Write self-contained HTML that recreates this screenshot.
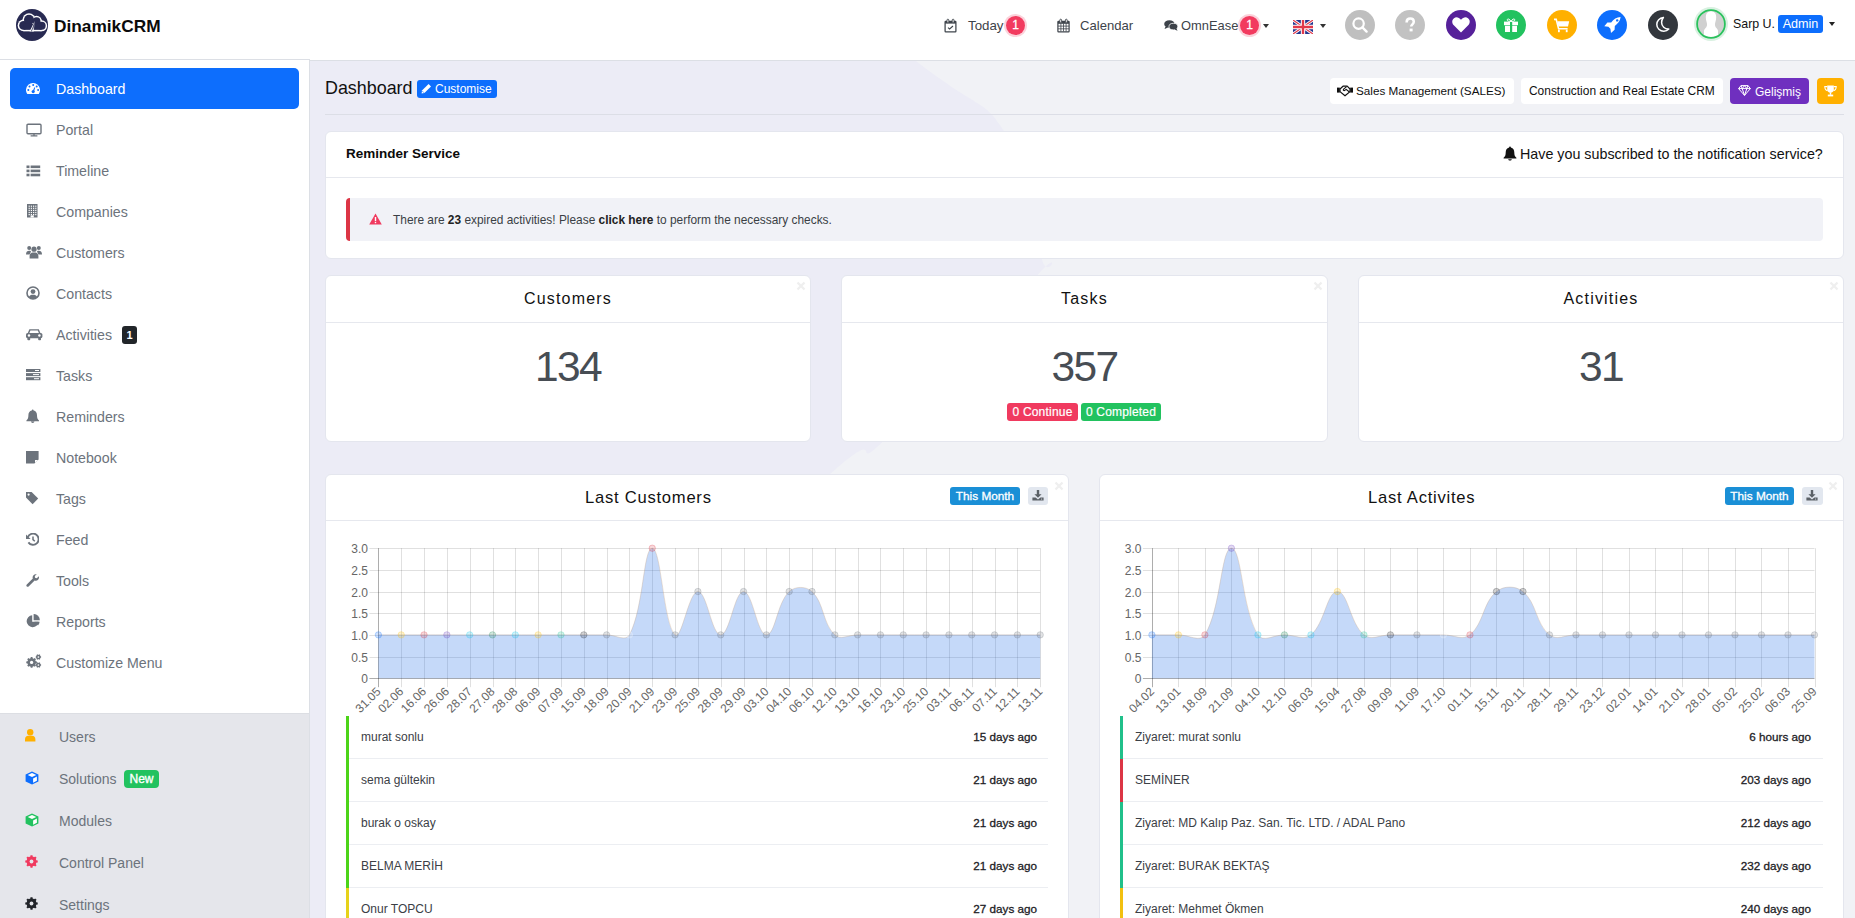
<!DOCTYPE html>
<html><head><meta charset="utf-8"><style>
*{box-sizing:border-box;margin:0;padding:0}
html,body{width:1855px;height:918px;overflow:hidden;font-family:"Liberation Sans",sans-serif;background:#eeeef6;color:#212529}
.a{position:absolute;white-space:nowrap}
#hdr{position:absolute;left:0;top:0;width:1855px;height:60px;background:#fff}
#side{position:absolute;left:0;top:60px;width:310px;height:858px;background:#fff;border-right:1px solid #dcdfe5}
#sideb{position:absolute;left:0;top:653px;width:309px;height:205px;background:#e5e6eb;border-top:1px solid #dcdee3}
.mi{position:absolute;left:0;width:309px;height:41px;font-size:14.2px;color:#6c737c}
.mi svg{position:absolute;left:26px;top:13px}
.mi .lb{position:absolute;left:56px;top:13px;white-space:nowrap;line-height:16px}
.card{position:absolute;background:#fff;border:1px solid #e4e6ee;border-radius:6px}
.circ{position:absolute;top:10px;width:30px;height:30px;border-radius:50%}
.circ svg{position:absolute;left:0;top:0}
.badge1{position:absolute;width:19px;height:19px;border-radius:50%;background:#f23b5f;box-shadow:0 0 0 2px #fbd3db;color:#fff;font-size:12px;font-weight:400;-webkit-text-stroke:0.3px #fff;text-align:center;line-height:19px}
.caret{position:absolute;width:0;height:0;border-left:3.5px solid transparent;border-right:3.5px solid transparent;border-top:4px solid #333}
.ttl{position:absolute;font-size:16px;letter-spacing:1.2px;color:#111;white-space:nowrap}
.xcl{position:absolute;color:#ddd;font-size:14px;font-weight:700;line-height:10px}
.li{position:absolute;height:43px;border-bottom:1px solid #eceef2}
.li .n{position:absolute;left:14px;top:14px;font-size:12px;color:#3d4248;white-space:nowrap}
.li .d{position:absolute;right:10px;top:14px;font-size:12px;font-weight:700;color:#23272b;white-space:nowrap}
</style></head><body>
<svg class="a" style="left:310px;top:60px" width="1545" height="858" viewBox="310 60 1545 858"><rect x="310" y="60" width="1545" height="858" fill="#f1f2f6"/><path d="M600 -180 C652.7 -139.8 848.7 9.2 916 61 C983.3 112.8 983.0 98.0 1004 131 C1025.0 164.0 1036.2 234.8 1041.8 258.8 C1047.4 282.8 1064.1 244.5 1037.6 275 C1011.1 305.5 916.6 409.1 882.7 441.7 C848.8 474.3 887.8 424.1 834 470.5 C780.2 516.9 657.3 631.8 560 720 C462.7 808.2 301.7 953.3 250 1000 L0 1000 L0 -200Z" fill="#ececf6"/></svg>
<div id="hdr"><svg class="a" style="left:16px;top:9px" width="32" height="32" viewBox="0 0 32 32"><circle cx="16" cy="16" r="16" fill="#282a52"/><circle cx="7.6" cy="16.4" r="5.95" fill="#fff"/><circle cx="13.0" cy="10.8" r="6.55" fill="#fff"/><circle cx="20.6" cy="12.2" r="5.35" fill="#fff"/><circle cx="25.6" cy="16.8" r="5.55" fill="#fff"/><rect x="7.6" y="13.25" width="18" height="9.10" fill="#fff"/><circle cx="7.6" cy="16.4" r="4.45" fill="#282a52"/><circle cx="13.0" cy="10.8" r="5.05" fill="#282a52"/><circle cx="20.6" cy="12.2" r="3.85" fill="#282a52"/><circle cx="25.6" cy="16.8" r="4.05" fill="#282a52"/><rect x="7.6" y="14.75" width="18" height="6.10" fill="#282a52"/><path d="M13.6 22.4 L18.6 12.2 L17.8 22.4Z" fill="#fff"/><path d="M15.2 22.6 L18.2 15.4" stroke="#282a52" stroke-width="0.7"/><path d="M17 20.6 L18.4 13.2" stroke="#282a52" stroke-width="0.5"/></svg><div class="a" style="left:54px;top:17px;font-size:17.3px;font-weight:700;color:#0b0b0b;line-height:18px">DinamikCRM</div><svg class="a" style="left:944px;top:18px" width="13" height="15" viewBox="0 0 13 15">
<rect x="1.1" y="3.4" width="10.8" height="10.4" rx="0.6" fill="none" stroke="#3f454c" stroke-width="1.25"/>
<rect x="1.1" y="3.4" width="10.8" height="2.2" fill="#3f454c"/>
<rect x="3" y="1.2" width="1.8" height="3.6" rx="0.9" fill="#fff" stroke="#3f454c" stroke-width="0.9"/><rect x="8.2" y="1.2" width="1.8" height="3.6" rx="0.9" fill="#fff" stroke="#3f454c" stroke-width="0.9"/>
<path d="M4 9.6 L5.6 11 L9 8" fill="none" stroke="#3f454c" stroke-width="1.1"/>
</svg><div class="a" style="left:968px;top:18px;font-size:13.3px;color:#3d434a;line-height:16px">Today</div><div class="badge1" style="left:1006px;top:16px">1</div><svg class="a" style="left:1057px;top:18px" width="13" height="15" viewBox="0 0 13 15">
<rect x="0.9" y="3.4" width="11.2" height="10.4" rx="0.6" fill="none" stroke="#3f454c" stroke-width="1.2"/>
<rect x="0.9" y="3.4" width="11.2" height="2.4" fill="#3f454c"/><line x1="3.9" y1="5.4" x2="3.9" y2="13.4" stroke="#3f454c" stroke-width="0.8"/><line x1="6.5" y1="5.4" x2="6.5" y2="13.4" stroke="#3f454c" stroke-width="0.8"/><line x1="9.1" y1="5.4" x2="9.1" y2="13.4" stroke="#3f454c" stroke-width="0.8"/><line x1="0.9" y1="8.1" x2="12.1" y2="8.1" stroke="#3f454c" stroke-width="0.8"/><line x1="0.9" y1="10.8" x2="12.1" y2="10.8" stroke="#3f454c" stroke-width="0.8"/>
<rect x="2.8" y="1.2" width="1.8" height="3.6" rx="0.9" fill="#fff" stroke="#3f454c" stroke-width="0.9"/><rect x="8.4" y="1.2" width="1.8" height="3.6" rx="0.9" fill="#fff" stroke="#3f454c" stroke-width="0.9"/>
</svg><div class="a" style="left:1080px;top:18px;font-size:13.1px;color:#3d434a;line-height:16px">Calendar</div><svg class="a" style="left:1164px;top:20px" width="14" height="11" viewBox="0 0 14 11">
<ellipse cx="5.4" cy="4" rx="5.2" ry="3.8" fill="#3d434a"/><path d="M1.5 6.5 L0.6 9 L4 7.5Z" fill="#3d434a"/>
<ellipse cx="9.4" cy="6.6" rx="4.4" ry="3.3" fill="#3d434a" stroke="#fff" stroke-width="0.8"/><path d="M12.4 8.6 L13.6 10.8 L10.4 9.6Z" fill="#3d434a"/>
</svg><div class="a" style="left:1181px;top:18px;font-size:12.9px;color:#3d434a;line-height:16px">OmnEase</div><div class="badge1" style="left:1240px;top:16px">1</div><div class="caret" style="left:1263px;top:24px"></div><svg class="a" style="left:1293px;top:20px" width="20" height="14" viewBox="0 0 60 42">
<rect width="60" height="42" fill="#23358f"/>
<path d="M0 0 L60 42 M60 0 L0 42" stroke="#fff" stroke-width="9"/>
<path d="M0 0 L60 42 M60 0 L0 42" stroke="#e2384a" stroke-width="3.5"/>
<path d="M30 0 V42 M0 21 H60" stroke="#fff" stroke-width="13"/>
<path d="M30 0 V42 M0 21 H60" stroke="#e2384a" stroke-width="7"/>
</svg><div class="caret" style="left:1320px;top:24px"></div><div class="circ" style="left:1345px;background:#bfbfbf"><svg width="30" height="30" viewBox="0 0 30 30"><circle cx="13.6" cy="13.6" r="5.2" fill="none" stroke="#fff" stroke-width="2.2"/><path d="M17.4 17.4 L21.6 21.6" stroke="#fff" stroke-width="2.4" stroke-linecap="round"/></svg></div><div class="circ" style="left:1395px;background:#c2c2c2"><svg width="30" height="30" viewBox="0 0 30 30"><path d="M11.6 12.4 C11.6 9.8 13.2 8.6 15.2 8.6 C17.4 8.6 18.8 9.9 18.8 11.8 C18.8 14.2 16.2 14.4 16.2 16.6" fill="none" stroke="#fff" stroke-width="2.5"/><rect x="14.6" y="18.6" width="3" height="2.8" fill="#fff"/></svg></div><div class="circ" style="left:1446px;background:#56219a"><svg width="30" height="30" viewBox="0 0 30 30"><path d="M15 22.4 L7.8 15.2 C5.6 13 5.8 9.8 8 8.2 C10.2 6.6 13 7.4 15 9.8 C17 7.4 19.8 6.6 22 8.2 C24.2 9.8 24.4 13 22.2 15.2Z" fill="#fff"/></svg></div><div class="circ" style="left:1496px;background:#22c25f"><svg width="30" height="30" viewBox="0 0 30 30"><rect x="8" y="11.6" width="14" height="3.6" fill="#fff"/><rect x="9" y="15.8" width="12" height="6.2" fill="#fff"/><rect x="14" y="11.6" width="2.2" height="10.4" fill="#22c25f"/><path d="M15 11.4 C13 8 10.6 8.6 11.4 10.6 C11.8 11.3 13.4 11.5 15 11.4 C16.6 11.5 18.2 11.3 18.6 10.6 C19.4 8.6 17 8 15 11.4Z" fill="none" stroke="#fff" stroke-width="1"/></svg></div><div class="circ" style="left:1547px;background:#ffb000"><svg width="30" height="30" viewBox="0 0 30 30"><path d="M7 9.4 L9.2 9.4 L11.6 18.8 L20.6 18.8" fill="none" stroke="#fff" stroke-width="1.6"/><path d="M10.3 11.2 L22.2 11.2 L21 16.6 L11.5 16.6Z" fill="#fff"/><rect x="11" y="19.6" width="1.8" height="2.6" fill="#fff"/><rect x="18.8" y="19.6" width="1.8" height="2.6" fill="#fff"/></svg></div><div class="circ" style="left:1597px;background:#0d6efd"><svg width="30" height="30" viewBox="0 0 30 30"><path d="M23.6 7.0 C19.6 7.2 16.6 9.2 14.2 12.4 L10.4 12.6 L7.3 16.2 L11.4 16.8 L13.4 18.8 L14 23 L17.6 19.8 L17.8 16 C21 13.6 23.2 10.8 23.6 7.0Z" fill="#fff"/><circle cx="20.2" cy="10.4" r="1.2" fill="#0d6efd"/></svg></div><div class="circ" style="left:1648px;background:#33373d"><svg width="30" height="30" viewBox="0 0 30 30"><path transform="translate(-0.8,-1.2)" stroke-linejoin="round" d="M16.2 8.6 C12.4 9 9.6 12 9.6 15.6 C9.6 19.4 12.8 22.4 16.6 22.4 C18.6 22.4 20.4 21.6 21.6 20.2 C17.6 20.4 14.4 17.6 14.4 13.8 C14.4 11.8 15.2 9.8 16.2 8.6Z" fill="none" stroke="#fff" stroke-width="1.5"/></svg></div><div class="a" style="left:1694px;top:7px;width:34px;height:34px;border-radius:50%;background:#d9f1e1"></div>
<svg class="a" style="left:1696px;top:9px" width="30" height="30" viewBox="0 0 30 30">
<defs><clipPath id="avc"><circle cx="15" cy="15" r="13"/></clipPath></defs>
<circle cx="15" cy="15" r="13" fill="#d0d0d0"/>
<g clip-path="url(#avc)"><path d="M11 4 C9.4 6 9.6 10 10.6 13 C11.2 15 11.4 17 9.6 19 C8.6 20 7.6 21.2 8 24 L8 30 L22 30 L22 24 C22.4 21.2 21.4 20 20.4 19 C18.6 17 18.8 15 19.4 13 C20.4 10 20.6 6 19 4 C17 1.6 13 1.6 11 4Z" fill="#fff"/></g>
<circle cx="15" cy="15" r="13.9" fill="none" stroke="#2ac15c" stroke-width="1.8"/>
</svg><div class="a" style="left:1733px;top:17px;font-size:12.4px;color:#111;line-height:15px">Sarp U.</div><div class="a" style="left:1778px;top:15px;width:45px;height:18px;border-radius:3px;background:#0d6efd;color:#fff;font-size:12.6px;line-height:18px;text-align:center">Admin</div><div class="caret" style="left:1829px;top:22px;border-top-color:#222"></div><div class="a" style="left:0;top:59px;width:310px;height:1px;background:#dcdfe5"></div><div class="a" style="left:309px;top:60px;width:1546px;height:1px;background:#dcdfe5"></div></div>
<div id="side"><div class="a" style="left:10px;top:8px;width:289px;height:41px;border-radius:5px;background:#0d6efd"></div><svg class="a" style="left:26px;top:23px" width="14" height="11" viewBox="0 0 14 11"><path d="M1.26 11 A7 7 0 1 1 12.74 11Z" fill="#fff"/><g fill="#0d6efd"><circle cx="7.2" cy="2.1" r="1"/><circle cx="3.5" cy="3.6" r="1"/><circle cx="10.7" cy="3.6" r="1"/><circle cx="2.3" cy="7" r="1"/><circle cx="12.1" cy="7" r="1"/><circle cx="7.2" cy="8.6" r="1.6"/><path d="M6.6 8.6 L8.4 4.2 L9.2 4.5 L7.8 8.9Z"/></g></svg><div class="a" style="left:56px;top:21px;font-size:14.2px;color:#fff;line-height:16px">Dashboard</div><svg class="a" style="left:26px;top:63px" width="16" height="14" viewBox="0 0 16 14"><rect x="1" y="1.2" width="14" height="9.6" rx="1" fill="none" stroke="#6c737c" stroke-width="1.4"/><path d="M8 11 V12.6 M4.6 12.9 H11.4" stroke="#6c737c" stroke-width="1.3"/></svg><div class="a" style="left:56px;top:62px;font-size:14.2px;color:#6c737c;line-height:16px">Portal</div><svg class="a" style="left:26px;top:104px" width="15" height="13" viewBox="0 0 15 13"><g fill="#6c737c"><rect x="0.5" y="1.5" width="3" height="2.6"/><rect x="4.6" y="1.5" width="9.6" height="2.6"/><rect x="0.5" y="5.6" width="3" height="2.6"/><rect x="4.6" y="5.6" width="9.6" height="2.6"/><rect x="0.5" y="9.7" width="3" height="2.6"/><rect x="4.6" y="9.7" width="9.6" height="2.6"/></g></svg><div class="a" style="left:56px;top:103px;font-size:14.2px;color:#6c737c;line-height:16px">Timeline</div><svg class="a" style="left:26px;top:144px" width="12" height="14" viewBox="0 0 12 14"><rect x="1" y="0" width="10.5" height="13.5" fill="#6c737c"/><g fill="#fff"><rect x="2.6" y="1.6" width="1.2" height="1.2"/><rect x="4.8" y="1.6" width="1.2" height="1.2"/><rect x="7.0" y="1.6" width="1.2" height="1.2"/><rect x="9.2" y="1.6" width="1.2" height="1.2"/><rect x="2.6" y="3.7" width="1.2" height="1.2"/><rect x="4.8" y="3.7" width="1.2" height="1.2"/><rect x="7.0" y="3.7" width="1.2" height="1.2"/><rect x="9.2" y="3.7" width="1.2" height="1.2"/><rect x="2.6" y="5.8" width="1.2" height="1.2"/><rect x="4.8" y="5.8" width="1.2" height="1.2"/><rect x="7.0" y="5.8" width="1.2" height="1.2"/><rect x="9.2" y="5.8" width="1.2" height="1.2"/><rect x="2.6" y="7.9" width="1.2" height="1.2"/><rect x="4.8" y="7.9" width="1.2" height="1.2"/><rect x="7.0" y="7.9" width="1.2" height="1.2"/><rect x="9.2" y="7.9" width="1.2" height="1.2"/><rect x="2.6" y="10.0" width="1.2" height="1.2"/><rect x="4.8" y="10.0" width="1.2" height="1.2"/><rect x="7.0" y="10.0" width="1.2" height="1.2"/><rect x="9.2" y="10.0" width="1.2" height="1.2"/><rect x="4.6" y="11.4" width="3.2" height="2.1"/></g></svg><div class="a" style="left:56px;top:144px;font-size:14.2px;color:#6c737c;line-height:16px">Companies</div><svg class="a" style="left:26px;top:185px" width="16" height="14" viewBox="0 0 16 14"><g fill="#6c737c"><circle cx="3.2" cy="3" r="2"/><circle cx="12.8" cy="3" r="2"/><circle cx="8" cy="4.2" r="2.6"/><path d="M0 9.4 C0 6.8 1.4 5.8 3.2 5.8 C4.4 5.8 5 6.4 5 6.4 L3.6 9.4Z"/><path d="M16 9.4 C16 6.8 14.6 5.8 12.8 5.8 C11.6 5.8 11 6.4 11 6.4 L12.4 9.4Z"/><path d="M3.6 13.6 L3.6 11 C3.6 8.6 5.2 7.4 6.6 7.4 L9.4 7.4 C10.8 7.4 12.4 8.6 12.4 11 L12.4 13.6Z"/></g></svg><div class="a" style="left:56px;top:185px;font-size:14.2px;color:#6c737c;line-height:16px">Customers</div><svg class="a" style="left:26px;top:226px" width="14" height="14" viewBox="0 0 14 14"><circle cx="7" cy="7" r="6" fill="none" stroke="#6c737c" stroke-width="1.6"/><circle cx="7" cy="5.6" r="2.4" fill="#6c737c"/><path d="M2.8 11 C3.6 9.4 5 8.8 7 8.8 C9 8.8 10.4 9.4 11.2 11 C10 12.4 8.6 13 7 13 C5.4 13 4 12.4 2.8 11Z" fill="#6c737c"/></svg><div class="a" style="left:56px;top:226px;font-size:14.2px;color:#6c737c;line-height:16px">Contacts</div><svg class="a" style="left:26px;top:268px" width="17" height="13" viewBox="0 0 17 13"><g fill="#6c737c"><path d="M3.4 1.2 L12.8 1.2 L14.6 5.6 L1.6 5.6Z"/><rect x="0" y="5" width="16.4" height="5.2" rx="1.6"/><rect x="1.4" y="9.6" width="2.8" height="2.6" rx="0.8"/><rect x="12.2" y="9.6" width="2.8" height="2.6" rx="0.8"/></g><path d="M4.4 2.6 L11.8 2.6 L12.9 5 L3.4 5Z" fill="#fff"/><circle cx="3" cy="7.5" r="1.2" fill="#fff"/><circle cx="13.4" cy="7.5" r="1.2" fill="#fff"/></svg><div class="a" style="left:56px;top:267px;font-size:14.2px;color:#6c737c;line-height:16px">Activities</div><div class="a" style="left:122px;top:266px;width:15px;height:18px;border-radius:3px;background:#212529;color:#fff;font-size:11px;font-weight:700;line-height:18px;text-align:center">1</div><svg class="a" style="left:26px;top:309px" width="15" height="12" viewBox="0 0 15 12"><g fill="#6c737c"><rect x="0" y="0" width="14.4" height="3"/><rect x="0" y="4.1" width="14.4" height="3"/><rect x="0" y="8.2" width="14.4" height="3"/></g><g fill="#fff"><rect x="9" y="1" width="4" height="1"/><rect x="7" y="5.1" width="6" height="1"/><rect x="8" y="9.2" width="5" height="1"/></g></svg><div class="a" style="left:56px;top:308px;font-size:14.2px;color:#6c737c;line-height:16px">Tasks</div><svg class="a" style="left:26px;top:349px" width="14" height="14" viewBox="0 0 14 14"><path d="M6.7 0.4 C7.3 0.4 7.6 0.8 7.6 1.4 C10 1.9 11 3.8 11 6.2 C11 9 11.6 10 13 11.4 L13 12.2 L0.4 12.2 L0.4 11.4 C1.8 10 2.4 9 2.4 6.2 C2.4 3.8 3.4 1.9 5.8 1.4 C5.8 0.8 6.1 0.4 6.7 0.4Z M5 12.6 L8.4 12.6 C8.4 13.4 7.6 14 6.7 14 C5.8 14 5 13.4 5 12.6Z" fill="#6c737c"/></svg><div class="a" style="left:56px;top:349px;font-size:14.2px;color:#6c737c;line-height:16px">Reminders</div><svg class="a" style="left:26px;top:391px" width="13" height="13" viewBox="0 0 13 13"><path d="M0 0 H12.6 V8.4 L8.4 12.4 H0Z" fill="#6c737c"/><path d="M9 12 L12.2 9 L9 9Z" fill="#fff"/></svg><div class="a" style="left:56px;top:390px;font-size:14.2px;color:#6c737c;line-height:16px">Notebook</div><svg class="a" style="left:26px;top:432px" width="13" height="13" viewBox="0 0 13 13"><path d="M0 0 H5.6 L12.2 6.6 L6.6 12.2 L0 5.6Z" fill="#6c737c"/><circle cx="2.6" cy="2.6" r="1.1" fill="#fff"/></svg><div class="a" style="left:56px;top:431px;font-size:14.2px;color:#6c737c;line-height:16px">Tags</div><svg class="a" style="left:26px;top:473px" width="13" height="13" viewBox="0 0 13 13"><path d="M1.8 4.2 A5.6 5.6 0 1 1 2.4 9.4" fill="none" stroke="#6c737c" stroke-width="1.9"/><path d="M0 1.4 L0 6 L4.6 6Z" fill="#6c737c"/><path d="M7 3.6 V6.6 L8.8 8.2" fill="none" stroke="#6c737c" stroke-width="1.5"/></svg><div class="a" style="left:56px;top:472px;font-size:14.2px;color:#6c737c;line-height:16px">Feed</div><svg class="a" style="left:26px;top:514px" width="13" height="13" viewBox="0 0 13 13"><path d="M9.8 0.2 C8 0.2 6.6 1.7 6.6 3.5 C6.6 3.9 6.7 4.3 6.8 4.6 L0.8 10.6 C0.2 11.2 0.2 12 0.8 12.5 C1.3 13 2.1 13 2.6 12.4 L8.6 6.4 C9 6.6 9.4 6.7 9.8 6.7 C11.6 6.7 13 5.2 13 3.4 C13 3 12.9 2.6 12.8 2.2 L10.8 4.2 L9 3.8 L8.8 2 L10.8 0.3 C10.5 0.2 10.2 0.2 9.8 0.2Z" fill="#6c737c"/></svg><div class="a" style="left:56px;top:513px;font-size:14.2px;color:#6c737c;line-height:16px">Tools</div><svg class="a" style="left:26px;top:554px" width="14" height="14" viewBox="0 0 14 14"><path d="M6.2 1.2 A6 6 0 1 0 12.6 7.8 L6.2 7.8Z" fill="#6c737c"/><path d="M7.6 0 A6 6 0 0 1 13.8 6.2 L7.6 6.2Z" fill="#6c737c"/><path d="M8.4 7.8 L13.6 7.8 A6 6 0 0 1 12 11.4Z" fill="#6c737c"/></svg><div class="a" style="left:56px;top:554px;font-size:14.2px;color:#6c737c;line-height:16px">Reports</div><svg class="a" style="left:26px;top:594px" width="16" height="15" viewBox="0 0 16 15"><path d="M9.34 7.34 L10.93 7.52 L10.93 9.28 L9.34 9.46 L9.00 10.29 L9.99 11.55 L8.75 12.79 L7.49 11.80 L6.66 12.14 L6.48 13.73 L4.72 13.73 L4.54 12.14 L3.71 11.80 L2.45 12.79 L1.21 11.55 L2.20 10.29 L1.86 9.46 L0.27 9.28 L0.27 7.52 L1.86 7.34 L2.20 6.51 L1.21 5.25 L2.45 4.01 L3.71 5.00 L4.54 4.66 L4.72 3.07 L6.48 3.07 L6.66 4.66 L7.49 5.00 L8.75 4.01 L9.99 5.25 L9.00 6.51Z" fill="#6c737c"/><circle cx="5.6" cy="8.4" r="4.21" fill="#6c737c"/><circle cx="5.6" cy="8.4" r="1.62" fill="#fff"/><path d="M14.28 2.27 L15.13 2.39 L15.13 3.61 L14.28 3.73 L13.97 4.27 L14.29 5.07 L13.24 5.67 L12.71 4.99 L12.09 4.99 L11.56 5.67 L10.51 5.07 L10.83 4.27 L10.52 3.73 L9.67 3.61 L9.67 2.39 L10.52 2.27 L10.83 1.73 L10.51 0.93 L11.56 0.33 L12.09 1.01 L12.71 1.01 L13.24 0.33 L14.29 0.93 L13.97 1.73Z" fill="#6c737c"/><circle cx="12.4" cy="3" r="2.18" fill="#6c737c"/><circle cx="12.4" cy="3" r="0.84" fill="#fff"/><path d="M14.28 10.27 L15.13 10.39 L15.13 11.61 L14.28 11.73 L13.97 12.27 L14.29 13.07 L13.24 13.67 L12.71 12.99 L12.09 12.99 L11.56 13.67 L10.51 13.07 L10.83 12.27 L10.52 11.73 L9.67 11.61 L9.67 10.39 L10.52 10.27 L10.83 9.73 L10.51 8.93 L11.56 8.33 L12.09 9.01 L12.71 9.01 L13.24 8.33 L14.29 8.93 L13.97 9.73Z" fill="#6c737c"/><circle cx="12.4" cy="11" r="2.18" fill="#6c737c"/><circle cx="12.4" cy="11" r="0.84" fill="#fff"/></svg><div class="a" style="left:56px;top:595px;font-size:14.2px;color:#6c737c;line-height:16px">Customize Menu</div><div id="sideb"></div><svg class="a" style="left:25px;top:669px" width="11" height="13" viewBox="0 0 11 13"><circle cx="5.2" cy="3.2" r="3.2" fill="#ffb000"/><path d="M0 12.4 L0 10.4 C0 8.2 1.4 6.8 3.2 6.8 L7.2 6.8 C9 6.8 10.4 8.2 10.4 10.4 L10.4 12.4Z" fill="#ffb000"/></svg><div class="a" style="left:59px;top:669px;font-size:14px;color:#6c737c;line-height:16px">Users</div><svg class="a" style="left:25px;top:711px" width="14" height="14" viewBox="0 0 14 14"><path d="M7 0.4 L13.4 3.4 L13.4 10.6 L7 13.6 L0.6 10.6 L0.6 3.4Z" fill="#0d6efd"/><path d="M7 2.1 L11.3 4.1 L7 6.1 L2.7 4.1Z" fill="#fff"/><path d="M8.1 7.4 L11.9 5.6 L11.9 9.8 L8.1 11.7Z" fill="#fff"/></svg><div class="a" style="left:59px;top:711px;font-size:14px;color:#6c737c;line-height:16px">Solutions</div><div class="a" style="left:124px;top:710px;width:35px;height:18px;border-radius:4px;background:#22c25f;color:#fff;font-size:12px;-webkit-text-stroke:0.35px #fff;line-height:18px;text-align:center">New</div><svg class="a" style="left:25px;top:753px" width="14" height="14" viewBox="0 0 14 14"><path d="M7 0.4 L13.4 3.4 L13.4 10.6 L7 13.6 L0.6 10.6 L0.6 3.4Z" fill="#22c25f"/><path d="M7 2.1 L11.3 4.1 L7 6.1 L2.7 4.1Z" fill="#fff"/><path d="M8.1 7.4 L11.9 5.6 L11.9 9.8 L8.1 11.7Z" fill="#fff"/></svg><div class="a" style="left:59px;top:753px;font-size:14px;color:#6c737c;line-height:16px">Modules</div><svg class="a" style="left:25px;top:795px" width="13" height="13" viewBox="0 0 13 13"><path d="M10.86 5.26 L12.72 5.48 L12.72 7.52 L10.86 7.74 L10.46 8.71 L11.62 10.17 L10.17 11.62 L8.71 10.46 L7.74 10.86 L7.52 12.72 L5.48 12.72 L5.26 10.86 L4.29 10.46 L2.83 11.62 L1.38 10.17 L2.54 8.71 L2.14 7.74 L0.28 7.52 L0.28 5.48 L2.14 5.26 L2.54 4.29 L1.38 2.83 L2.83 1.38 L4.29 2.54 L5.26 2.14 L5.48 0.28 L7.52 0.28 L7.74 2.14 L8.71 2.54 L10.17 1.38 L11.62 2.83 L10.46 4.29Z" fill="#f03a5f"/><circle cx="6.5" cy="6.5" r="4.91" fill="#f03a5f"/><circle cx="6.5" cy="6.5" r="1.89" fill="#e5e6eb"/></svg><div class="a" style="left:59px;top:795px;font-size:14px;color:#6c737c;line-height:16px">Control Panel</div><svg class="a" style="left:25px;top:837px" width="13" height="13" viewBox="0 0 13 13"><path d="M10.86 5.26 L12.72 5.48 L12.72 7.52 L10.86 7.74 L10.46 8.71 L11.62 10.17 L10.17 11.62 L8.71 10.46 L7.74 10.86 L7.52 12.72 L5.48 12.72 L5.26 10.86 L4.29 10.46 L2.83 11.62 L1.38 10.17 L2.54 8.71 L2.14 7.74 L0.28 7.52 L0.28 5.48 L2.14 5.26 L2.54 4.29 L1.38 2.83 L2.83 1.38 L4.29 2.54 L5.26 2.14 L5.48 0.28 L7.52 0.28 L7.74 2.14 L8.71 2.54 L10.17 1.38 L11.62 2.83 L10.46 4.29Z" fill="#22252a"/><circle cx="6.5" cy="6.5" r="4.91" fill="#22252a"/><circle cx="6.5" cy="6.5" r="1.89" fill="#e5e6eb"/></svg><div class="a" style="left:59px;top:837px;font-size:14px;color:#6c737c;line-height:16px">Settings</div></div>
<div class="a" style="left:325px;top:78px;font-size:17.9px;color:#111;line-height:20px">Dashboard</div><div class="a" style="left:417px;top:80px;width:80px;height:18px;border-radius:3px;background:#0d6efd"></div>
<svg class="a" style="left:421px;top:83px" width="11" height="11" viewBox="0 0 11 11"><path d="M0.6 10.4 L1 7.6 L7.6 1 L10 3.4 L3.4 10Z" fill="#fff"/><path d="M1.4 8.2 L2.8 9.6" stroke="#0d6efd" stroke-width="0.8"/></svg>
<div class="a" style="left:435px;top:82px;font-size:12px;color:#fff;line-height:15px">Customise</div><div class="a" style="left:1330px;top:78px;width:184px;height:26px;border-radius:4px;background:#fff"></div>
<svg class="a" style="left:1337px;top:85px" width="16" height="12" viewBox="0 0 16 12"><rect x="0" y="2.6" width="2.8" height="5" fill="#111"/><rect x="13.2" y="2.6" width="2.8" height="5" fill="#111"/><path d="M3 4 L6 1.2 L10.2 1.2 L13 4 L13 6.6 L8 10.8 L3 6.6Z" fill="none" stroke="#111" stroke-width="1.2" stroke-linejoin="round"/><path d="M9.6 1.6 L6.4 4.4 C6 5.2 6.8 6 7.8 5.4 L9.2 4.4 L12.4 7" fill="none" stroke="#111" stroke-width="1.1"/></svg>
<div class="a" style="left:1356px;top:84px;font-size:11.7px;color:#111;line-height:14px">Sales Management (SALES)</div>
<div class="a" style="left:1521px;top:78px;width:202px;height:26px;border-radius:4px;background:#fff"></div>
<div class="a" style="left:1529px;top:84px;font-size:11.95px;color:#111;line-height:14px">Construction and Real Estate CRM</div>
<div class="a" style="left:1730px;top:78px;width:79px;height:26px;border-radius:4px;background:#6f2fbf"></div>
<svg class="a" style="left:1738px;top:85px" width="13" height="11" viewBox="0 0 13 11"><path d="M3 0.6 H10 L12.4 3.6 L6.5 10.4 L0.6 3.6Z M0.6 3.6 H12.4 M4.2 3.6 L6.5 10.4 L8.8 3.6 M3 0.6 L4.2 3.6 L6.5 0.6 L8.8 3.6 L10 0.6" fill="none" stroke="#fff" stroke-width="1"/></svg>
<div class="a" style="left:1755px;top:85px;font-size:12px;color:#fff;line-height:14px">Gelişmiş</div>
<div class="a" style="left:1817px;top:78px;width:27px;height:26px;border-radius:4px;background:#ffb000"></div>
<svg class="a" style="left:1824px;top:85px" width="13" height="12" viewBox="0 0 13 12"><path d="M3.2 0.6 H9.8 V4.6 C9.8 6.6 8.4 7.8 6.5 7.8 C4.6 7.8 3.2 6.6 3.2 4.6Z" fill="#fff"/><path d="M3.2 1.6 H0.8 C0.8 4 1.8 5.4 3.6 5.6 M9.8 1.6 H12.2 C12.2 4 11.2 5.4 9.4 5.6" fill="none" stroke="#fff" stroke-width="1.1"/><rect x="5.8" y="7.4" width="1.4" height="2.4" fill="#fff"/><rect x="3.8" y="9.6" width="5.4" height="1.8" fill="#fff"/></svg><div class="a" style="left:325px;top:114px;width:1519px;height:1px;background:#dcdee6"></div><div class="card" style="left:325px;top:131px;width:1519px;height:128px"></div>
<div class="a" style="left:326px;top:177px;width:1517px;height:1px;background:#e6e8ee"></div>
<div class="a" style="left:346px;top:146px;font-size:13.5px;font-weight:700;color:#0b0b0b;line-height:16px">Reminder Service</div>
<svg class="a" style="left:1503px;top:146px" width="14" height="15" viewBox="0 0 14 15"><path d="M7 0.4 C7.6 0.4 7.9 0.8 7.9 1.4 C10.3 1.9 11.3 3.8 11.3 6.4 C11.3 9.2 11.9 10.4 13.4 11.8 L13.4 12.6 L0.6 12.6 L0.6 11.8 C2.1 10.4 2.7 9.2 2.7 6.4 C2.7 3.8 3.7 1.9 6.1 1.4 C6.1 0.8 6.4 0.4 7 0.4Z M5.2 13.2 L8.8 13.2 C8.8 14 8 14.6 7 14.6 C6 14.6 5.2 14 5.2 13.2Z" fill="#111"/></svg>
<div class="a" style="left:1520px;top:146px;font-size:14.3px;color:#111;line-height:16px">Have you subscribed to the notification service?</div>
<div class="a" style="left:346px;top:198px;width:1477px;height:43px;border-radius:4px;background:#f1f2f7;border-left:4px solid #dc3545"></div>
<svg class="a" style="left:369px;top:213px" width="13" height="12" viewBox="0 0 13 12"><path d="M6.5 0.4 L12.8 11.6 L0.2 11.6Z" fill="#f03a5f"/><rect x="5.8" y="4" width="1.4" height="4" fill="#fff"/><rect x="5.8" y="8.8" width="1.4" height="1.4" fill="#fff"/></svg>
<div class="a" style="left:393px;top:213px;font-size:11.9px;color:#3a3f45;line-height:14px">There are <b style="color:#222">23</b> expired activities! Please <b style="color:#222">click here</b> to perform the necessary checks.</div><div class="card" style="left:325px;top:275px;width:486px;height:167px"></div><div class="a" style="left:326px;top:322px;width:484px;height:1px;background:#e6e8ee"></div><div class="ttl" style="left:325px;width:486px;top:290px;text-align:center;line-height:18px">Customers</div><div class="a" style="left:325px;width:486px;top:344px;text-align:center;font-size:42.5px;color:#474d54;line-height:46px;letter-spacing:-1.6px">134</div><svg class="a" style="left:796px;top:281px" width="10" height="10" viewBox="0 0 10 10"><path d="M1.5 1.5 L8.5 8.5 M8.5 1.5 L1.5 8.5" stroke="#efefef" stroke-width="2.4"/></svg><div class="card" style="left:841px;top:275px;width:487px;height:167px"></div><div class="a" style="left:842px;top:322px;width:485px;height:1px;background:#e6e8ee"></div><div class="ttl" style="left:841px;width:487px;top:290px;text-align:center;line-height:18px">Tasks</div><div class="a" style="left:841px;width:487px;top:344px;text-align:center;font-size:42.5px;color:#474d54;line-height:46px;letter-spacing:-1.6px">357</div><svg class="a" style="left:1313px;top:281px" width="10" height="10" viewBox="0 0 10 10"><path d="M1.5 1.5 L8.5 8.5 M8.5 1.5 L1.5 8.5" stroke="#efefef" stroke-width="2.4"/></svg><div class="a" style="left:1007px;top:403px;width:71px;height:18px;border-radius:3px;background:#f03a5f;color:#fff;font-size:12px;letter-spacing:0.2px;-webkit-text-stroke:0.2px #fff;line-height:18px;text-align:center">0 Continue</div><div class="a" style="left:1081px;top:403px;width:80px;height:18px;border-radius:3px;background:#22c25f;color:#fff;font-size:12px;letter-spacing:0.2px;-webkit-text-stroke:0.2px #fff;line-height:18px;text-align:center">0 Completed</div><div class="card" style="left:1358px;top:275px;width:486px;height:167px"></div><div class="a" style="left:1359px;top:322px;width:484px;height:1px;background:#e6e8ee"></div><div class="ttl" style="left:1358px;width:486px;top:290px;text-align:center;line-height:18px">Activities</div><div class="a" style="left:1358px;width:486px;top:344px;text-align:center;font-size:42.5px;color:#474d54;line-height:46px;letter-spacing:-1.6px">31</div><svg class="a" style="left:1829px;top:281px" width="10" height="10" viewBox="0 0 10 10"><path d="M1.5 1.5 L8.5 8.5 M8.5 1.5 L1.5 8.5" stroke="#efefef" stroke-width="2.4"/></svg><div class="card" style="left:325px;top:474px;width:744px;height:460px"></div><div class="a" style="left:326px;top:520px;width:742px;height:1px;background:#e6e8ee"></div><div class="ttl" style="left:585px;top:489px;line-height:18px;font-size:16.6px;letter-spacing:0.75px">Last Customers</div><div class="a" style="left:950px;top:487px;width:70px;height:18px;border-radius:3px;background:#1a8fd6;color:#fff;font-size:11.8px;-webkit-text-stroke:0.3px #fff;line-height:18px;text-align:center">This Month</div><div class="a" style="left:1028px;top:487px;width:20px;height:18px;border-radius:3px;background:#e2e7ef"></div><svg class="a" style="left:1032px;top:490px" width="12" height="12" viewBox="0 0 12 12"><path d="M4.8 0 H7.2 V4.2 H9.6 L6 7.8 L2.4 4.2 H4.8Z M0.4 7.4 H3.6 L6 9.4 L8.4 7.4 H11.6 V10.6 H0.4Z" fill="#5b6167"/><circle cx="9.6" cy="9" r="0.6" fill="#e2e8f0"/></svg><svg class="a" style="left:1054px;top:481px" width="10" height="10" viewBox="0 0 10 10"><path d="M1.5 1.5 L8.5 8.5 M8.5 1.5 L1.5 8.5" stroke="#efefef" stroke-width="2.4"/></svg><svg class="a" style="left:335px;top:530px" width="725" height="185" viewBox="0 0 725 185"><line x1="34.4" y1="148.5" x2="705.2" y2="148.5" stroke="rgba(0,0,0,0.32)" stroke-width="1"/><text x="32.9" y="152.7" text-anchor="end" font-size="12" fill="#666" font-family="Liberation Sans">0</text><line x1="34.4" y1="127.5" x2="705.2" y2="127.5" stroke="rgba(0,0,0,0.12)" stroke-width="1"/><text x="32.9" y="131.7" text-anchor="end" font-size="12" fill="#666" font-family="Liberation Sans">0.5</text><line x1="34.4" y1="105.5" x2="705.2" y2="105.5" stroke="rgba(0,0,0,0.12)" stroke-width="1"/><text x="32.9" y="109.7" text-anchor="end" font-size="12" fill="#666" font-family="Liberation Sans">1.0</text><line x1="34.4" y1="83.5" x2="705.2" y2="83.5" stroke="rgba(0,0,0,0.12)" stroke-width="1"/><text x="32.9" y="87.7" text-anchor="end" font-size="12" fill="#666" font-family="Liberation Sans">1.5</text><line x1="34.4" y1="62.5" x2="705.2" y2="62.5" stroke="rgba(0,0,0,0.12)" stroke-width="1"/><text x="32.9" y="66.7" text-anchor="end" font-size="12" fill="#666" font-family="Liberation Sans">2.0</text><line x1="34.4" y1="40.5" x2="705.2" y2="40.5" stroke="rgba(0,0,0,0.12)" stroke-width="1"/><text x="32.9" y="44.7" text-anchor="end" font-size="12" fill="#666" font-family="Liberation Sans">2.5</text><line x1="34.4" y1="18.5" x2="705.2" y2="18.5" stroke="rgba(0,0,0,0.12)" stroke-width="1"/><text x="32.9" y="22.7" text-anchor="end" font-size="12" fill="#666" font-family="Liberation Sans">3.0</text><line x1="43.5" y1="18.2" x2="43.5" y2="157.2" stroke="rgba(0,0,0,0.32)" stroke-width="1"/><text transform="translate(46.4,162.2) rotate(-45)" text-anchor="end" font-size="12" fill="#666" font-family="Liberation Sans">31.05</text><line x1="66.5" y1="18.2" x2="66.5" y2="157.2" stroke="rgba(0,0,0,0.12)" stroke-width="1"/><text transform="translate(69.2,162.2) rotate(-45)" text-anchor="end" font-size="12" fill="#666" font-family="Liberation Sans">02.06</text><line x1="89.5" y1="18.2" x2="89.5" y2="157.2" stroke="rgba(0,0,0,0.12)" stroke-width="1"/><text transform="translate(92.0,162.2) rotate(-45)" text-anchor="end" font-size="12" fill="#666" font-family="Liberation Sans">16.06</text><line x1="112.5" y1="18.2" x2="112.5" y2="157.2" stroke="rgba(0,0,0,0.12)" stroke-width="1"/><text transform="translate(114.9,162.2) rotate(-45)" text-anchor="end" font-size="12" fill="#666" font-family="Liberation Sans">26.06</text><line x1="135.5" y1="18.2" x2="135.5" y2="157.2" stroke="rgba(0,0,0,0.12)" stroke-width="1"/><text transform="translate(137.7,162.2) rotate(-45)" text-anchor="end" font-size="12" fill="#666" font-family="Liberation Sans">28.07</text><line x1="158.5" y1="18.2" x2="158.5" y2="157.2" stroke="rgba(0,0,0,0.12)" stroke-width="1"/><text transform="translate(160.5,162.2) rotate(-45)" text-anchor="end" font-size="12" fill="#666" font-family="Liberation Sans">27.08</text><line x1="180.5" y1="18.2" x2="180.5" y2="157.2" stroke="rgba(0,0,0,0.12)" stroke-width="1"/><text transform="translate(183.3,162.2) rotate(-45)" text-anchor="end" font-size="12" fill="#666" font-family="Liberation Sans">28.08</text><line x1="203.5" y1="18.2" x2="203.5" y2="157.2" stroke="rgba(0,0,0,0.12)" stroke-width="1"/><text transform="translate(206.1,162.2) rotate(-45)" text-anchor="end" font-size="12" fill="#666" font-family="Liberation Sans">06.09</text><line x1="226.5" y1="18.2" x2="226.5" y2="157.2" stroke="rgba(0,0,0,0.12)" stroke-width="1"/><text transform="translate(229.0,162.2) rotate(-45)" text-anchor="end" font-size="12" fill="#666" font-family="Liberation Sans">07.09</text><line x1="249.5" y1="18.2" x2="249.5" y2="157.2" stroke="rgba(0,0,0,0.12)" stroke-width="1"/><text transform="translate(251.8,162.2) rotate(-45)" text-anchor="end" font-size="12" fill="#666" font-family="Liberation Sans">15.09</text><line x1="272.5" y1="18.2" x2="272.5" y2="157.2" stroke="rgba(0,0,0,0.12)" stroke-width="1"/><text transform="translate(274.6,162.2) rotate(-45)" text-anchor="end" font-size="12" fill="#666" font-family="Liberation Sans">18.09</text><line x1="294.5" y1="18.2" x2="294.5" y2="157.2" stroke="rgba(0,0,0,0.12)" stroke-width="1"/><text transform="translate(297.4,162.2) rotate(-45)" text-anchor="end" font-size="12" fill="#666" font-family="Liberation Sans">20.09</text><line x1="317.5" y1="18.2" x2="317.5" y2="157.2" stroke="rgba(0,0,0,0.12)" stroke-width="1"/><text transform="translate(320.2,162.2) rotate(-45)" text-anchor="end" font-size="12" fill="#666" font-family="Liberation Sans">21.09</text><line x1="340.5" y1="18.2" x2="340.5" y2="157.2" stroke="rgba(0,0,0,0.12)" stroke-width="1"/><text transform="translate(343.1,162.2) rotate(-45)" text-anchor="end" font-size="12" fill="#666" font-family="Liberation Sans">23.09</text><line x1="363.5" y1="18.2" x2="363.5" y2="157.2" stroke="rgba(0,0,0,0.12)" stroke-width="1"/><text transform="translate(365.9,162.2) rotate(-45)" text-anchor="end" font-size="12" fill="#666" font-family="Liberation Sans">25.09</text><line x1="386.5" y1="18.2" x2="386.5" y2="157.2" stroke="rgba(0,0,0,0.12)" stroke-width="1"/><text transform="translate(388.7,162.2) rotate(-45)" text-anchor="end" font-size="12" fill="#666" font-family="Liberation Sans">28.09</text><line x1="409.5" y1="18.2" x2="409.5" y2="157.2" stroke="rgba(0,0,0,0.12)" stroke-width="1"/><text transform="translate(411.5,162.2) rotate(-45)" text-anchor="end" font-size="12" fill="#666" font-family="Liberation Sans">29.09</text><line x1="431.5" y1="18.2" x2="431.5" y2="157.2" stroke="rgba(0,0,0,0.12)" stroke-width="1"/><text transform="translate(434.4,162.2) rotate(-45)" text-anchor="end" font-size="12" fill="#666" font-family="Liberation Sans">03.10</text><line x1="454.5" y1="18.2" x2="454.5" y2="157.2" stroke="rgba(0,0,0,0.12)" stroke-width="1"/><text transform="translate(457.2,162.2) rotate(-45)" text-anchor="end" font-size="12" fill="#666" font-family="Liberation Sans">04.10</text><line x1="477.5" y1="18.2" x2="477.5" y2="157.2" stroke="rgba(0,0,0,0.12)" stroke-width="1"/><text transform="translate(480.0,162.2) rotate(-45)" text-anchor="end" font-size="12" fill="#666" font-family="Liberation Sans">06.10</text><line x1="500.5" y1="18.2" x2="500.5" y2="157.2" stroke="rgba(0,0,0,0.12)" stroke-width="1"/><text transform="translate(502.8,162.2) rotate(-45)" text-anchor="end" font-size="12" fill="#666" font-family="Liberation Sans">12.10</text><line x1="523.5" y1="18.2" x2="523.5" y2="157.2" stroke="rgba(0,0,0,0.12)" stroke-width="1"/><text transform="translate(525.6,162.2) rotate(-45)" text-anchor="end" font-size="12" fill="#666" font-family="Liberation Sans">13.10</text><line x1="545.5" y1="18.2" x2="545.5" y2="157.2" stroke="rgba(0,0,0,0.12)" stroke-width="1"/><text transform="translate(548.5,162.2) rotate(-45)" text-anchor="end" font-size="12" fill="#666" font-family="Liberation Sans">16.10</text><line x1="568.5" y1="18.2" x2="568.5" y2="157.2" stroke="rgba(0,0,0,0.12)" stroke-width="1"/><text transform="translate(571.3,162.2) rotate(-45)" text-anchor="end" font-size="12" fill="#666" font-family="Liberation Sans">23.10</text><line x1="591.5" y1="18.2" x2="591.5" y2="157.2" stroke="rgba(0,0,0,0.12)" stroke-width="1"/><text transform="translate(594.1,162.2) rotate(-45)" text-anchor="end" font-size="12" fill="#666" font-family="Liberation Sans">25.10</text><line x1="614.5" y1="18.2" x2="614.5" y2="157.2" stroke="rgba(0,0,0,0.12)" stroke-width="1"/><text transform="translate(616.9,162.2) rotate(-45)" text-anchor="end" font-size="12" fill="#666" font-family="Liberation Sans">03.11</text><line x1="637.5" y1="18.2" x2="637.5" y2="157.2" stroke="rgba(0,0,0,0.12)" stroke-width="1"/><text transform="translate(639.7,162.2) rotate(-45)" text-anchor="end" font-size="12" fill="#666" font-family="Liberation Sans">06.11</text><line x1="660.5" y1="18.2" x2="660.5" y2="157.2" stroke="rgba(0,0,0,0.12)" stroke-width="1"/><text transform="translate(662.6,162.2) rotate(-45)" text-anchor="end" font-size="12" fill="#666" font-family="Liberation Sans">07.11</text><line x1="682.5" y1="18.2" x2="682.5" y2="157.2" stroke="rgba(0,0,0,0.12)" stroke-width="1"/><text transform="translate(685.4,162.2) rotate(-45)" text-anchor="end" font-size="12" fill="#666" font-family="Liberation Sans">12.11</text><line x1="705.5" y1="18.2" x2="705.5" y2="157.2" stroke="rgba(0,0,0,0.12)" stroke-width="1"/><text transform="translate(708.2,162.2) rotate(-45)" text-anchor="end" font-size="12" fill="#666" font-family="Liberation Sans">13.11</text><path d="M43.40 104.87 C52.53 104.87 57.09 104.87 66.22 104.87 C75.35 104.87 79.91 104.87 89.04 104.87 C98.17 104.87 102.73 104.87 111.86 104.87 C120.99 104.87 125.55 104.87 134.68 104.87 C143.81 104.87 148.38 104.87 157.50 104.87 C166.63 104.87 171.20 104.87 180.32 104.87 C189.45 104.87 194.02 104.87 203.14 104.87 C212.27 104.87 216.84 104.87 225.97 104.87 C235.09 104.87 239.66 104.87 248.79 104.87 C257.91 104.87 262.48 104.87 271.61 104.87 C280.74 104.87 290.72 111.91 294.43 104.87 C308.98 77.24 308.12 18.21 317.25 18.21 C326.38 18.21 328.26 93.66 340.07 104.87 C346.52 110.99 353.76 61.54 362.89 61.54 C372.02 61.54 376.58 104.87 385.71 104.87 C394.84 104.87 399.40 61.54 408.53 61.54 C417.66 61.54 422.22 104.87 431.35 104.87 C440.48 104.87 441.72 73.36 454.17 61.54 C459.98 56.03 471.19 56.03 476.99 61.54 C489.45 73.36 487.36 93.05 499.81 104.87 C505.62 110.38 513.51 104.87 522.63 104.87 C531.76 104.87 536.33 104.87 545.46 104.87 C554.58 104.87 559.15 104.87 568.28 104.87 C577.40 104.87 581.97 104.87 591.10 104.87 C600.22 104.87 604.79 104.87 613.92 104.87 C623.05 104.87 627.61 104.87 636.74 104.87 C645.87 104.87 650.43 104.87 659.56 104.87 C668.69 104.87 673.25 104.87 682.38 104.87 C691.51 104.87 696.07 104.87 705.20 104.87 L705.20 148.20 L43.40 148.20Z" fill="rgb(62,128,235)" fill-opacity="0.3"/><path d="M43.40 104.87 C52.53 104.87 57.09 104.87 66.22 104.87 C75.35 104.87 79.91 104.87 89.04 104.87 C98.17 104.87 102.73 104.87 111.86 104.87 C120.99 104.87 125.55 104.87 134.68 104.87 C143.81 104.87 148.38 104.87 157.50 104.87 C166.63 104.87 171.20 104.87 180.32 104.87 C189.45 104.87 194.02 104.87 203.14 104.87 C212.27 104.87 216.84 104.87 225.97 104.87 C235.09 104.87 239.66 104.87 248.79 104.87 C257.91 104.87 262.48 104.87 271.61 104.87 C280.74 104.87 290.72 111.91 294.43 104.87 C308.98 77.24 308.12 18.21 317.25 18.21 C326.38 18.21 328.26 93.66 340.07 104.87 C346.52 110.99 353.76 61.54 362.89 61.54 C372.02 61.54 376.58 104.87 385.71 104.87 C394.84 104.87 399.40 61.54 408.53 61.54 C417.66 61.54 422.22 104.87 431.35 104.87 C440.48 104.87 441.72 73.36 454.17 61.54 C459.98 56.03 471.19 56.03 476.99 61.54 C489.45 73.36 487.36 93.05 499.81 104.87 C505.62 110.38 513.51 104.87 522.63 104.87 C531.76 104.87 536.33 104.87 545.46 104.87 C554.58 104.87 559.15 104.87 568.28 104.87 C577.40 104.87 581.97 104.87 591.10 104.87 C600.22 104.87 604.79 104.87 613.92 104.87 C623.05 104.87 627.61 104.87 636.74 104.87 C645.87 104.87 650.43 104.87 659.56 104.87 C668.69 104.87 673.25 104.87 682.38 104.87 C691.51 104.87 696.07 104.87 705.20 104.87" fill="none" stroke="rgba(200,170,140,0.35)" stroke-width="1"/><circle cx="43.40" cy="104.87" r="3.2" fill="#0d6efd" fill-opacity="0.2" stroke="#0d6efd" stroke-opacity="0.25"/><circle cx="66.22" cy="104.87" r="3.2" fill="#ffc107" fill-opacity="0.2" stroke="#ffc107" stroke-opacity="0.25"/><circle cx="89.04" cy="104.87" r="3.2" fill="#dc3545" fill-opacity="0.2" stroke="#dc3545" stroke-opacity="0.25"/><circle cx="111.86" cy="104.87" r="3.2" fill="#6f42c1" fill-opacity="0.2" stroke="#6f42c1" stroke-opacity="0.25"/><circle cx="134.68" cy="104.87" r="3.2" fill="#0dcaf0" fill-opacity="0.2" stroke="#0dcaf0" stroke-opacity="0.25"/><circle cx="157.50" cy="104.87" r="3.2" fill="#198754" fill-opacity="0.2" stroke="#198754" stroke-opacity="0.25"/><circle cx="180.32" cy="104.87" r="3.2" fill="#0dcaf0" fill-opacity="0.2" stroke="#0dcaf0" stroke-opacity="0.25"/><circle cx="203.14" cy="104.87" r="3.2" fill="#ffc107" fill-opacity="0.2" stroke="#ffc107" stroke-opacity="0.25"/><circle cx="225.97" cy="104.87" r="3.2" fill="#20c997" fill-opacity="0.2" stroke="#20c997" stroke-opacity="0.25"/><circle cx="248.79" cy="104.87" r="3.2" fill="#212529" fill-opacity="0.2" stroke="#212529" stroke-opacity="0.25"/><circle cx="271.61" cy="104.87" r="3.2" fill="#6c757d" fill-opacity="0.2" stroke="#6c757d" stroke-opacity="0.25"/><circle cx="294.43" cy="104.87" r="3.2" fill="#f8f9fa" fill-opacity="0.2" stroke="#f8f9fa" stroke-opacity="0.25"/><circle cx="317.25" cy="18.21" r="3.2" fill="#dc3545" fill-opacity="0.2" stroke="#dc3545" stroke-opacity="0.25"/><circle cx="340.07" cy="104.87" r="3.2" fill="#6c757d" fill-opacity="0.2" stroke="#6c757d" stroke-opacity="0.25"/><circle cx="362.89" cy="61.54" r="3.2" fill="#6c757d" fill-opacity="0.2" stroke="#6c757d" stroke-opacity="0.25"/><circle cx="385.71" cy="104.87" r="3.2" fill="#6c757d" fill-opacity="0.2" stroke="#6c757d" stroke-opacity="0.25"/><circle cx="408.53" cy="61.54" r="3.2" fill="#6c757d" fill-opacity="0.2" stroke="#6c757d" stroke-opacity="0.25"/><circle cx="431.35" cy="104.87" r="3.2" fill="#6c757d" fill-opacity="0.2" stroke="#6c757d" stroke-opacity="0.25"/><circle cx="454.17" cy="61.54" r="3.2" fill="#6c757d" fill-opacity="0.2" stroke="#6c757d" stroke-opacity="0.25"/><circle cx="476.99" cy="61.54" r="3.2" fill="#6c757d" fill-opacity="0.2" stroke="#6c757d" stroke-opacity="0.25"/><circle cx="499.81" cy="104.87" r="3.2" fill="#6c757d" fill-opacity="0.2" stroke="#6c757d" stroke-opacity="0.25"/><circle cx="522.63" cy="104.87" r="3.2" fill="#6c757d" fill-opacity="0.2" stroke="#6c757d" stroke-opacity="0.25"/><circle cx="545.46" cy="104.87" r="3.2" fill="#6c757d" fill-opacity="0.2" stroke="#6c757d" stroke-opacity="0.25"/><circle cx="568.28" cy="104.87" r="3.2" fill="#6c757d" fill-opacity="0.2" stroke="#6c757d" stroke-opacity="0.25"/><circle cx="591.10" cy="104.87" r="3.2" fill="#6c757d" fill-opacity="0.2" stroke="#6c757d" stroke-opacity="0.25"/><circle cx="613.92" cy="104.87" r="3.2" fill="#6c757d" fill-opacity="0.2" stroke="#6c757d" stroke-opacity="0.25"/><circle cx="636.74" cy="104.87" r="3.2" fill="#6c757d" fill-opacity="0.2" stroke="#6c757d" stroke-opacity="0.25"/><circle cx="659.56" cy="104.87" r="3.2" fill="#6c757d" fill-opacity="0.2" stroke="#6c757d" stroke-opacity="0.25"/><circle cx="682.38" cy="104.87" r="3.2" fill="#6c757d" fill-opacity="0.2" stroke="#6c757d" stroke-opacity="0.25"/><circle cx="705.20" cy="104.87" r="3.2" fill="#6c757d" fill-opacity="0.2" stroke="#6c757d" stroke-opacity="0.25"/></svg><div class="a" style="left:346px;top:716px;width:3px;height:43px;background:#4cd418"></div><div class="a" style="left:349px;top:758px;width:699px;height:1px;background:#eceef2"></div><div class="a" style="left:361px;top:730px;font-size:12px;color:#3b4046;line-height:14px">murat sonlu</div><div class="a" style="left:346px;width:691px;top:730px;font-size:11.7px;font-weight:400;-webkit-text-stroke:0.3px #1d2125;color:#1d2125;line-height:14px;text-align:right">15 days ago</div><div class="a" style="left:346px;top:759px;width:3px;height:43px;background:#4cd418"></div><div class="a" style="left:349px;top:801px;width:699px;height:1px;background:#eceef2"></div><div class="a" style="left:361px;top:773px;font-size:12px;color:#3b4046;line-height:14px">sema gültekin</div><div class="a" style="left:346px;width:691px;top:773px;font-size:11.7px;font-weight:400;-webkit-text-stroke:0.3px #1d2125;color:#1d2125;line-height:14px;text-align:right">21 days ago</div><div class="a" style="left:346px;top:802px;width:3px;height:43px;background:#4cd418"></div><div class="a" style="left:349px;top:844px;width:699px;height:1px;background:#eceef2"></div><div class="a" style="left:361px;top:816px;font-size:12px;color:#3b4046;line-height:14px">burak o oskay</div><div class="a" style="left:346px;width:691px;top:816px;font-size:11.7px;font-weight:400;-webkit-text-stroke:0.3px #1d2125;color:#1d2125;line-height:14px;text-align:right">21 days ago</div><div class="a" style="left:346px;top:845px;width:3px;height:43px;background:#4cd418"></div><div class="a" style="left:349px;top:887px;width:699px;height:1px;background:#eceef2"></div><div class="a" style="left:361px;top:859px;font-size:12px;color:#3b4046;line-height:14px">BELMA MERİH</div><div class="a" style="left:346px;width:691px;top:859px;font-size:11.7px;font-weight:400;-webkit-text-stroke:0.3px #1d2125;color:#1d2125;line-height:14px;text-align:right">21 days ago</div><div class="a" style="left:346px;top:888px;width:3px;height:43px;background:#e6d21a"></div><div class="a" style="left:349px;top:930px;width:699px;height:1px;background:#eceef2"></div><div class="a" style="left:361px;top:902px;font-size:12px;color:#3b4046;line-height:14px">Onur TOPCU</div><div class="a" style="left:346px;width:691px;top:902px;font-size:11.7px;font-weight:400;-webkit-text-stroke:0.3px #1d2125;color:#1d2125;line-height:14px;text-align:right">27 days ago</div><div class="card" style="left:1099px;top:474px;width:745px;height:460px"></div><div class="a" style="left:1100px;top:520px;width:743px;height:1px;background:#e6e8ee"></div><div class="ttl" style="left:1368px;top:489px;line-height:18px;font-size:16.6px;letter-spacing:0.75px">Last Activites</div><div class="a" style="left:1725px;top:487px;width:69px;height:18px;border-radius:3px;background:#1a8fd6;color:#fff;font-size:11.8px;-webkit-text-stroke:0.3px #fff;line-height:18px;text-align:center">This Month</div><div class="a" style="left:1802px;top:487px;width:21px;height:18px;border-radius:3px;background:#e2e7ef"></div><svg class="a" style="left:1806px;top:490px" width="12" height="12" viewBox="0 0 12 12"><path d="M4.8 0 H7.2 V4.2 H9.6 L6 7.8 L2.4 4.2 H4.8Z M0.4 7.4 H3.6 L6 9.4 L8.4 7.4 H11.6 V10.6 H0.4Z" fill="#5b6167"/><circle cx="9.6" cy="9" r="0.6" fill="#e2e8f0"/></svg><svg class="a" style="left:1828px;top:481px" width="10" height="10" viewBox="0 0 10 10"><path d="M1.5 1.5 L8.5 8.5 M8.5 1.5 L1.5 8.5" stroke="#efefef" stroke-width="2.4"/></svg><svg class="a" style="left:1109px;top:530px" width="725" height="185" viewBox="0 0 725 185"><line x1="33.9" y1="148.5" x2="705.5" y2="148.5" stroke="rgba(0,0,0,0.32)" stroke-width="1"/><text x="32.4" y="152.7" text-anchor="end" font-size="12" fill="#666" font-family="Liberation Sans">0</text><line x1="33.9" y1="127.5" x2="705.5" y2="127.5" stroke="rgba(0,0,0,0.12)" stroke-width="1"/><text x="32.4" y="131.7" text-anchor="end" font-size="12" fill="#666" font-family="Liberation Sans">0.5</text><line x1="33.9" y1="105.5" x2="705.5" y2="105.5" stroke="rgba(0,0,0,0.12)" stroke-width="1"/><text x="32.4" y="109.7" text-anchor="end" font-size="12" fill="#666" font-family="Liberation Sans">1.0</text><line x1="33.9" y1="83.5" x2="705.5" y2="83.5" stroke="rgba(0,0,0,0.12)" stroke-width="1"/><text x="32.4" y="87.7" text-anchor="end" font-size="12" fill="#666" font-family="Liberation Sans">1.5</text><line x1="33.9" y1="62.5" x2="705.5" y2="62.5" stroke="rgba(0,0,0,0.12)" stroke-width="1"/><text x="32.4" y="66.7" text-anchor="end" font-size="12" fill="#666" font-family="Liberation Sans">2.0</text><line x1="33.9" y1="40.5" x2="705.5" y2="40.5" stroke="rgba(0,0,0,0.12)" stroke-width="1"/><text x="32.4" y="44.7" text-anchor="end" font-size="12" fill="#666" font-family="Liberation Sans">2.5</text><line x1="33.9" y1="18.5" x2="705.5" y2="18.5" stroke="rgba(0,0,0,0.12)" stroke-width="1"/><text x="32.4" y="22.7" text-anchor="end" font-size="12" fill="#666" font-family="Liberation Sans">3.0</text><line x1="43.5" y1="18.2" x2="43.5" y2="157.2" stroke="rgba(0,0,0,0.32)" stroke-width="1"/><text transform="translate(45.9,162.2) rotate(-45)" text-anchor="end" font-size="12" fill="#666" font-family="Liberation Sans">04.02</text><line x1="69.5" y1="18.2" x2="69.5" y2="157.2" stroke="rgba(0,0,0,0.12)" stroke-width="1"/><text transform="translate(72.4,162.2) rotate(-45)" text-anchor="end" font-size="12" fill="#666" font-family="Liberation Sans">13.01</text><line x1="96.5" y1="18.2" x2="96.5" y2="157.2" stroke="rgba(0,0,0,0.12)" stroke-width="1"/><text transform="translate(98.9,162.2) rotate(-45)" text-anchor="end" font-size="12" fill="#666" font-family="Liberation Sans">18.09</text><line x1="122.5" y1="18.2" x2="122.5" y2="157.2" stroke="rgba(0,0,0,0.12)" stroke-width="1"/><text transform="translate(125.4,162.2) rotate(-45)" text-anchor="end" font-size="12" fill="#666" font-family="Liberation Sans">21.09</text><line x1="149.5" y1="18.2" x2="149.5" y2="157.2" stroke="rgba(0,0,0,0.12)" stroke-width="1"/><text transform="translate(151.9,162.2) rotate(-45)" text-anchor="end" font-size="12" fill="#666" font-family="Liberation Sans">04.10</text><line x1="175.5" y1="18.2" x2="175.5" y2="157.2" stroke="rgba(0,0,0,0.12)" stroke-width="1"/><text transform="translate(178.4,162.2) rotate(-45)" text-anchor="end" font-size="12" fill="#666" font-family="Liberation Sans">12.10</text><line x1="202.5" y1="18.2" x2="202.5" y2="157.2" stroke="rgba(0,0,0,0.12)" stroke-width="1"/><text transform="translate(204.9,162.2) rotate(-45)" text-anchor="end" font-size="12" fill="#666" font-family="Liberation Sans">06.03</text><line x1="228.5" y1="18.2" x2="228.5" y2="157.2" stroke="rgba(0,0,0,0.12)" stroke-width="1"/><text transform="translate(231.4,162.2) rotate(-45)" text-anchor="end" font-size="12" fill="#666" font-family="Liberation Sans">15.04</text><line x1="255.5" y1="18.2" x2="255.5" y2="157.2" stroke="rgba(0,0,0,0.12)" stroke-width="1"/><text transform="translate(257.9,162.2) rotate(-45)" text-anchor="end" font-size="12" fill="#666" font-family="Liberation Sans">27.08</text><line x1="281.5" y1="18.2" x2="281.5" y2="157.2" stroke="rgba(0,0,0,0.12)" stroke-width="1"/><text transform="translate(284.4,162.2) rotate(-45)" text-anchor="end" font-size="12" fill="#666" font-family="Liberation Sans">09.09</text><line x1="308.5" y1="18.2" x2="308.5" y2="157.2" stroke="rgba(0,0,0,0.12)" stroke-width="1"/><text transform="translate(310.9,162.2) rotate(-45)" text-anchor="end" font-size="12" fill="#666" font-family="Liberation Sans">11.09</text><line x1="334.5" y1="18.2" x2="334.5" y2="157.2" stroke="rgba(0,0,0,0.12)" stroke-width="1"/><text transform="translate(337.4,162.2) rotate(-45)" text-anchor="end" font-size="12" fill="#666" font-family="Liberation Sans">17.10</text><line x1="361.5" y1="18.2" x2="361.5" y2="157.2" stroke="rgba(0,0,0,0.12)" stroke-width="1"/><text transform="translate(363.9,162.2) rotate(-45)" text-anchor="end" font-size="12" fill="#666" font-family="Liberation Sans">01.11</text><line x1="387.5" y1="18.2" x2="387.5" y2="157.2" stroke="rgba(0,0,0,0.12)" stroke-width="1"/><text transform="translate(390.5,162.2) rotate(-45)" text-anchor="end" font-size="12" fill="#666" font-family="Liberation Sans">15.11</text><line x1="414.5" y1="18.2" x2="414.5" y2="157.2" stroke="rgba(0,0,0,0.12)" stroke-width="1"/><text transform="translate(417.0,162.2) rotate(-45)" text-anchor="end" font-size="12" fill="#666" font-family="Liberation Sans">20.11</text><line x1="440.5" y1="18.2" x2="440.5" y2="157.2" stroke="rgba(0,0,0,0.12)" stroke-width="1"/><text transform="translate(443.5,162.2) rotate(-45)" text-anchor="end" font-size="12" fill="#666" font-family="Liberation Sans">28.11</text><line x1="467.5" y1="18.2" x2="467.5" y2="157.2" stroke="rgba(0,0,0,0.12)" stroke-width="1"/><text transform="translate(470.0,162.2) rotate(-45)" text-anchor="end" font-size="12" fill="#666" font-family="Liberation Sans">29.11</text><line x1="493.5" y1="18.2" x2="493.5" y2="157.2" stroke="rgba(0,0,0,0.12)" stroke-width="1"/><text transform="translate(496.5,162.2) rotate(-45)" text-anchor="end" font-size="12" fill="#666" font-family="Liberation Sans">23.12</text><line x1="520.5" y1="18.2" x2="520.5" y2="157.2" stroke="rgba(0,0,0,0.12)" stroke-width="1"/><text transform="translate(523.0,162.2) rotate(-45)" text-anchor="end" font-size="12" fill="#666" font-family="Liberation Sans">02.01</text><line x1="546.5" y1="18.2" x2="546.5" y2="157.2" stroke="rgba(0,0,0,0.12)" stroke-width="1"/><text transform="translate(549.5,162.2) rotate(-45)" text-anchor="end" font-size="12" fill="#666" font-family="Liberation Sans">14.01</text><line x1="573.5" y1="18.2" x2="573.5" y2="157.2" stroke="rgba(0,0,0,0.12)" stroke-width="1"/><text transform="translate(576.0,162.2) rotate(-45)" text-anchor="end" font-size="12" fill="#666" font-family="Liberation Sans">21.01</text><line x1="599.5" y1="18.2" x2="599.5" y2="157.2" stroke="rgba(0,0,0,0.12)" stroke-width="1"/><text transform="translate(602.5,162.2) rotate(-45)" text-anchor="end" font-size="12" fill="#666" font-family="Liberation Sans">28.01</text><line x1="626.5" y1="18.2" x2="626.5" y2="157.2" stroke="rgba(0,0,0,0.12)" stroke-width="1"/><text transform="translate(629.0,162.2) rotate(-45)" text-anchor="end" font-size="12" fill="#666" font-family="Liberation Sans">05.02</text><line x1="652.5" y1="18.2" x2="652.5" y2="157.2" stroke="rgba(0,0,0,0.12)" stroke-width="1"/><text transform="translate(655.5,162.2) rotate(-45)" text-anchor="end" font-size="12" fill="#666" font-family="Liberation Sans">25.02</text><line x1="679.5" y1="18.2" x2="679.5" y2="157.2" stroke="rgba(0,0,0,0.12)" stroke-width="1"/><text transform="translate(682.0,162.2) rotate(-45)" text-anchor="end" font-size="12" fill="#666" font-family="Liberation Sans">06.03</text><line x1="706.5" y1="18.2" x2="706.5" y2="157.2" stroke="rgba(0,0,0,0.12)" stroke-width="1"/><text transform="translate(708.5,162.2) rotate(-45)" text-anchor="end" font-size="12" fill="#666" font-family="Liberation Sans">25.09</text><path d="M42.90 104.87 C53.50 104.87 58.80 104.87 69.40 104.87 C80.01 104.87 91.11 112.71 95.91 104.87 C112.31 78.05 111.81 18.21 122.41 18.21 C133.01 18.21 132.51 78.05 148.92 104.87 C153.71 112.71 164.82 104.87 175.42 104.87 C186.02 104.87 194.65 110.81 201.92 104.87 C215.86 93.48 217.83 61.54 228.43 61.54 C239.03 61.54 241.00 93.48 254.93 104.87 C262.20 110.81 270.83 104.87 281.44 104.87 C292.04 104.87 297.34 104.87 307.94 104.87 C318.54 104.87 323.84 104.87 334.44 104.87 C345.05 104.87 353.68 110.81 360.95 104.87 C374.88 93.48 373.52 72.93 387.45 61.54 C394.72 55.60 406.69 55.60 413.96 61.54 C427.89 72.93 426.53 93.48 440.46 104.87 C447.73 110.81 456.36 104.87 466.96 104.87 C477.57 104.87 482.87 104.87 493.47 104.87 C504.07 104.87 509.37 104.87 519.97 104.87 C530.57 104.87 535.87 104.87 546.48 104.87 C557.08 104.87 562.38 104.87 572.98 104.87 C583.58 104.87 588.88 104.87 599.48 104.87 C610.09 104.87 615.39 104.87 625.99 104.87 C636.59 104.87 641.89 104.87 652.49 104.87 C663.09 104.87 668.39 104.87 679.00 104.87 C689.60 104.87 694.90 104.87 705.50 104.87 L705.50 148.20 L42.90 148.20Z" fill="rgb(62,128,235)" fill-opacity="0.3"/><path d="M42.90 104.87 C53.50 104.87 58.80 104.87 69.40 104.87 C80.01 104.87 91.11 112.71 95.91 104.87 C112.31 78.05 111.81 18.21 122.41 18.21 C133.01 18.21 132.51 78.05 148.92 104.87 C153.71 112.71 164.82 104.87 175.42 104.87 C186.02 104.87 194.65 110.81 201.92 104.87 C215.86 93.48 217.83 61.54 228.43 61.54 C239.03 61.54 241.00 93.48 254.93 104.87 C262.20 110.81 270.83 104.87 281.44 104.87 C292.04 104.87 297.34 104.87 307.94 104.87 C318.54 104.87 323.84 104.87 334.44 104.87 C345.05 104.87 353.68 110.81 360.95 104.87 C374.88 93.48 373.52 72.93 387.45 61.54 C394.72 55.60 406.69 55.60 413.96 61.54 C427.89 72.93 426.53 93.48 440.46 104.87 C447.73 110.81 456.36 104.87 466.96 104.87 C477.57 104.87 482.87 104.87 493.47 104.87 C504.07 104.87 509.37 104.87 519.97 104.87 C530.57 104.87 535.87 104.87 546.48 104.87 C557.08 104.87 562.38 104.87 572.98 104.87 C583.58 104.87 588.88 104.87 599.48 104.87 C610.09 104.87 615.39 104.87 625.99 104.87 C636.59 104.87 641.89 104.87 652.49 104.87 C663.09 104.87 668.39 104.87 679.00 104.87 C689.60 104.87 694.90 104.87 705.50 104.87" fill="none" stroke="rgba(200,170,140,0.35)" stroke-width="1"/><circle cx="42.90" cy="104.87" r="3.2" fill="#0d6efd" fill-opacity="0.2" stroke="#0d6efd" stroke-opacity="0.25"/><circle cx="69.40" cy="104.87" r="3.2" fill="#ffc107" fill-opacity="0.2" stroke="#ffc107" stroke-opacity="0.25"/><circle cx="95.91" cy="104.87" r="3.2" fill="#dc3545" fill-opacity="0.2" stroke="#dc3545" stroke-opacity="0.25"/><circle cx="122.41" cy="18.21" r="3.2" fill="#6f42c1" fill-opacity="0.2" stroke="#6f42c1" stroke-opacity="0.25"/><circle cx="148.92" cy="104.87" r="3.2" fill="#0dcaf0" fill-opacity="0.2" stroke="#0dcaf0" stroke-opacity="0.25"/><circle cx="175.42" cy="104.87" r="3.2" fill="#198754" fill-opacity="0.2" stroke="#198754" stroke-opacity="0.25"/><circle cx="201.92" cy="104.87" r="3.2" fill="#0dcaf0" fill-opacity="0.2" stroke="#0dcaf0" stroke-opacity="0.25"/><circle cx="228.43" cy="61.54" r="3.2" fill="#ffc107" fill-opacity="0.2" stroke="#ffc107" stroke-opacity="0.25"/><circle cx="254.93" cy="104.87" r="3.2" fill="#20c997" fill-opacity="0.2" stroke="#20c997" stroke-opacity="0.25"/><circle cx="281.44" cy="104.87" r="3.2" fill="#212529" fill-opacity="0.2" stroke="#212529" stroke-opacity="0.25"/><circle cx="307.94" cy="104.87" r="3.2" fill="#6c757d" fill-opacity="0.2" stroke="#6c757d" stroke-opacity="0.25"/><circle cx="334.44" cy="104.87" r="3.2" fill="#f8f9fa" fill-opacity="0.2" stroke="#f8f9fa" stroke-opacity="0.25"/><circle cx="360.95" cy="104.87" r="3.2" fill="#dc3545" fill-opacity="0.2" stroke="#dc3545" stroke-opacity="0.25"/><circle cx="387.45" cy="61.54" r="3.2" fill="#212529" fill-opacity="0.2" stroke="#212529" stroke-opacity="0.25"/><circle cx="413.96" cy="61.54" r="3.2" fill="#212529" fill-opacity="0.2" stroke="#212529" stroke-opacity="0.25"/><circle cx="440.46" cy="104.87" r="3.2" fill="#6c757d" fill-opacity="0.2" stroke="#6c757d" stroke-opacity="0.25"/><circle cx="466.96" cy="104.87" r="3.2" fill="#6c757d" fill-opacity="0.2" stroke="#6c757d" stroke-opacity="0.25"/><circle cx="493.47" cy="104.87" r="3.2" fill="#6c757d" fill-opacity="0.2" stroke="#6c757d" stroke-opacity="0.25"/><circle cx="519.97" cy="104.87" r="3.2" fill="#6c757d" fill-opacity="0.2" stroke="#6c757d" stroke-opacity="0.25"/><circle cx="546.48" cy="104.87" r="3.2" fill="#6c757d" fill-opacity="0.2" stroke="#6c757d" stroke-opacity="0.25"/><circle cx="572.98" cy="104.87" r="3.2" fill="#6c757d" fill-opacity="0.2" stroke="#6c757d" stroke-opacity="0.25"/><circle cx="599.48" cy="104.87" r="3.2" fill="#6c757d" fill-opacity="0.2" stroke="#6c757d" stroke-opacity="0.25"/><circle cx="625.99" cy="104.87" r="3.2" fill="#6c757d" fill-opacity="0.2" stroke="#6c757d" stroke-opacity="0.25"/><circle cx="652.49" cy="104.87" r="3.2" fill="#6c757d" fill-opacity="0.2" stroke="#6c757d" stroke-opacity="0.25"/><circle cx="679.00" cy="104.87" r="3.2" fill="#6c757d" fill-opacity="0.2" stroke="#6c757d" stroke-opacity="0.25"/><circle cx="705.50" cy="104.87" r="3.2" fill="#6c757d" fill-opacity="0.2" stroke="#6c757d" stroke-opacity="0.25"/></svg><div class="a" style="left:1120px;top:716px;width:3px;height:43px;background:#20c08a"></div><div class="a" style="left:1123px;top:758px;width:700px;height:1px;background:#eceef2"></div><div class="a" style="left:1135px;top:730px;font-size:12px;color:#3b4046;line-height:14px">Ziyaret: murat sonlu</div><div class="a" style="left:1120px;width:691px;top:730px;font-size:11.7px;font-weight:400;-webkit-text-stroke:0.3px #1d2125;color:#1d2125;line-height:14px;text-align:right">6 hours ago</div><div class="a" style="left:1120px;top:759px;width:3px;height:43px;background:#dc3545"></div><div class="a" style="left:1123px;top:801px;width:700px;height:1px;background:#eceef2"></div><div class="a" style="left:1135px;top:773px;font-size:12px;color:#3b4046;line-height:14px">SEMİNER</div><div class="a" style="left:1120px;width:691px;top:773px;font-size:11.7px;font-weight:400;-webkit-text-stroke:0.3px #1d2125;color:#1d2125;line-height:14px;text-align:right">203 days ago</div><div class="a" style="left:1120px;top:802px;width:3px;height:43px;background:#20c08a"></div><div class="a" style="left:1123px;top:844px;width:700px;height:1px;background:#eceef2"></div><div class="a" style="left:1135px;top:816px;font-size:12px;color:#3b4046;line-height:14px">Ziyaret: MD Kalıp Paz. San. Tic. LTD. / ADAL Pano</div><div class="a" style="left:1120px;width:691px;top:816px;font-size:11.7px;font-weight:400;-webkit-text-stroke:0.3px #1d2125;color:#1d2125;line-height:14px;text-align:right">212 days ago</div><div class="a" style="left:1120px;top:845px;width:3px;height:43px;background:#20c08a"></div><div class="a" style="left:1123px;top:887px;width:700px;height:1px;background:#eceef2"></div><div class="a" style="left:1135px;top:859px;font-size:12px;color:#3b4046;line-height:14px">Ziyaret: BURAK BEKTAŞ</div><div class="a" style="left:1120px;width:691px;top:859px;font-size:11.7px;font-weight:400;-webkit-text-stroke:0.3px #1d2125;color:#1d2125;line-height:14px;text-align:right">232 days ago</div><div class="a" style="left:1120px;top:888px;width:3px;height:43px;background:#f2c010"></div><div class="a" style="left:1123px;top:930px;width:700px;height:1px;background:#eceef2"></div><div class="a" style="left:1135px;top:902px;font-size:12px;color:#3b4046;line-height:14px">Ziyaret: Mehmet Ökmen</div><div class="a" style="left:1120px;width:691px;top:902px;font-size:11.7px;font-weight:400;-webkit-text-stroke:0.3px #1d2125;color:#1d2125;line-height:14px;text-align:right">240 days ago</div></body></html>
